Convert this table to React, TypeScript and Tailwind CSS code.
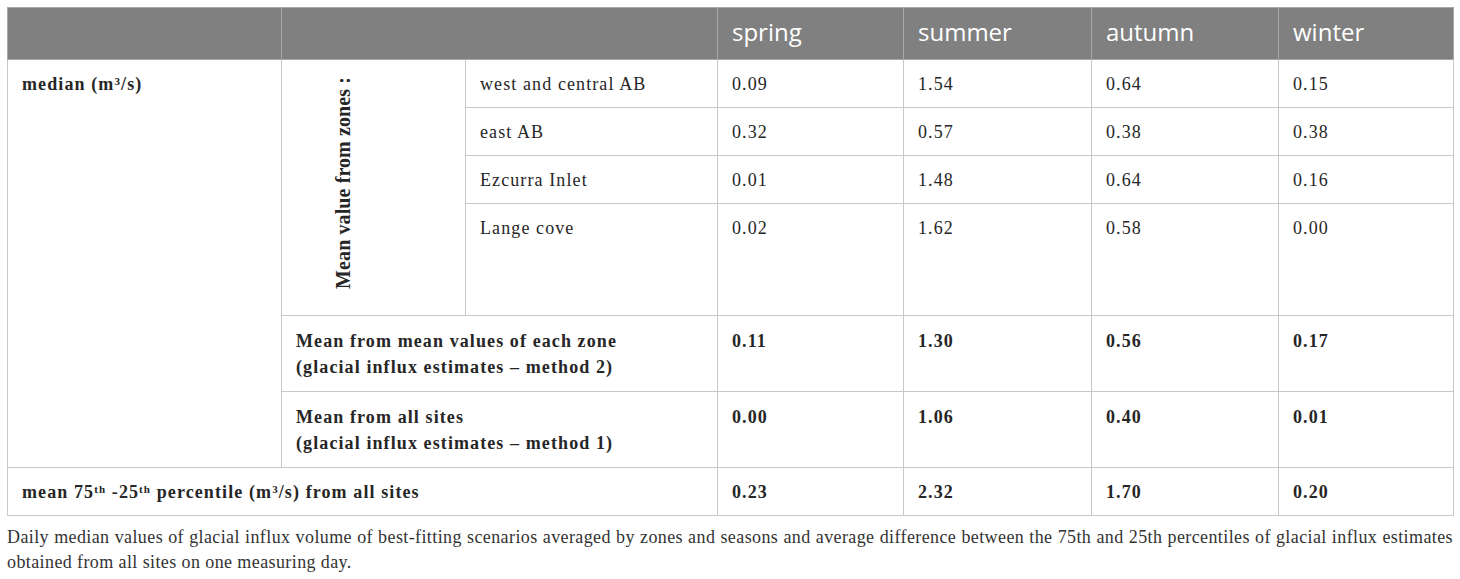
const serif = "font-['Liberation_Serif',serif]";

const zones = [
  { name: "west and central AB", v: ["0.09", "1.54", "0.64", "0.15"] },
  { name: "east AB", v: ["0.32", "0.57", "0.38", "0.38"] },
  { name: "Ezcurra Inlet", v: ["0.01", "1.48", "0.64", "0.16"] },
  { name: "Lange cove", v: ["0.02", "1.62", "0.58", "0.00"] },
];

const cell = "border border-[#c8c8c8] align-top px-[14px] pt-3 pb-[11px]";

function Cube() {
  return (
    <>
      (m<sup className="text-[11px]">3</sup>/s)
    </>
  );
}

export default function App() {
  return (
    <div className="bg-white w-[1460px] h-[579px] pt-[7px] px-[7px] text-[#262626]">
      <table className="border-collapse table-fixed w-[1446px]">
        <colgroup>
          <col className="w-[274px]" />
          <col className="w-[184px]" />
          <col className="w-[252px]" />
          <col className="w-[186px]" />
          <col className="w-[188px]" />
          <col className="w-[187px]" />
          <col className="w-[175px]" />
        </colgroup>
        <thead>
          <tr className="bg-[#808080] text-white font-['Open_Sans',sans-serif] text-[24px] h-[52px]">
            <th className="border border-[#a8a8a8]" />
            <th colSpan={2} className="border border-[#a8a8a8]" />
            {["spring", "summer", "autumn", "winter"].map((s) => (
              <th key={s} className="border border-[#a8a8a8] text-left font-normal px-[14px] pb-1 leading-[26px]">
                {s}
              </th>
            ))}
          </tr>
        </thead>
        <tbody className={`${serif} text-[18px] leading-6 tracking-[1.1px]`}>
          {zones.map((z, i) => (
            <tr key={z.name} className={i === 3 ? "h-[112px]" : "h-[47px]"}>
              {i === 0 && (
                <>
                  <td rowSpan={6} className={`${cell} font-bold`}>
                    median <Cube />
                  </td>
                  <td rowSpan={4} className="border border-[#c8c8c8] p-0 align-middle">
                    <div className="flex items-center pl-[51px] pb-[9px]">
                      <span className="[writing-mode:vertical-rl] rotate-180 font-bold text-[20px] leading-[20px] tracking-[0.1px]">
                        Mean value from zones :
                      </span>
                    </div>
                  </td>
                </>
              )}
              <td className={cell}>{z.name}</td>
              {z.v.map((v, j) => (
                <td key={j} className={cell}>
                  {v}
                </td>
              ))}
            </tr>
          ))}
          <tr className="h-[75px] font-bold">
            <td colSpan={2} className={`${cell} leading-[26px]`}>
              Mean from mean values of each zone
              <br />
              (glacial influx estimates – method 2)
            </td>
            {["0.11", "1.30", "0.56", "0.17"].map((v, j) => (
              <td key={j} className={`${cell} leading-[26px]`}>
                {v}
              </td>
            ))}
          </tr>
          <tr className="h-[75px] font-bold">
            <td colSpan={2} className={`${cell} leading-[26px]`}>
              Mean from all sites
              <br />
              (glacial influx estimates – method 1)
            </td>
            {["0.00", "1.06", "0.40", "0.01"].map((v, j) => (
              <td key={j} className={`${cell} leading-[26px]`}>
                {v}
              </td>
            ))}
          </tr>
          <tr className="h-[48px] font-bold">
            <td colSpan={3} className={cell}>
              mean 75<sup className="text-[11px]">th</sup> -25<sup className="text-[11px]">th</sup> percentile <Cube /> from all sites
            </td>
            {["0.23", "2.32", "1.70", "0.20"].map((v, j) => (
              <td key={j} className={cell}>
                {v}
              </td>
            ))}
          </tr>
        </tbody>
      </table>
      <p className={`${serif} text-[18px] leading-[25px] tracking-[0.4px] text-justify mt-[9px] w-[1446px] text-[#333]`}>
        Daily median values of glacial influx volume of best-fitting scenarios averaged by zones and seasons and average
        difference between the 75th and 25th percentiles of glacial influx estimates obtained from all sites on one
        measuring day.
      </p>
    </div>
  );
}
